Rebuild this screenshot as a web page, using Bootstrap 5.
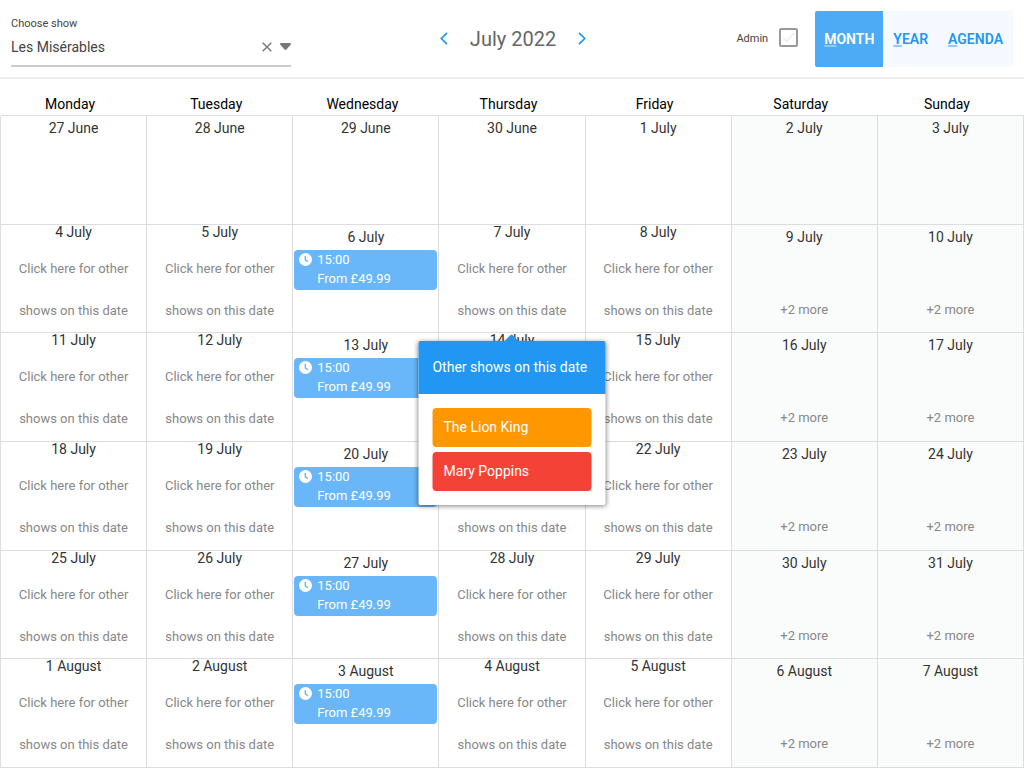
<!DOCTYPE html>
<html lang="en">
<head>
<meta charset="utf-8">
<meta name="viewport" content="width=device-width, initial-scale=1">
<title>Show calendar</title>
<link href="https://cdn.jsdelivr.net/npm/bootstrap@5.3.0/dist/css/bootstrap.min.css" rel="stylesheet">
<style>
  body { font-family: Roboto, "Liberation Sans", sans-serif; font-size: 14px; color: #333; background: #fff; }
  .topbar { height: 79px; border-bottom: 2px solid #eee; padding: 0 11px; }
  .side { flex: 1 1 0; min-width: 0; }
  .show-field { max-width: 280px; padding-top: 6px; }
  .small-label { font-size: 11px; line-height: 14px; color: #444; }
  .show-box { height: 36px; border-bottom: 2px solid #ccc; padding-bottom: 2px; }
  .show-select { appearance: none; border: 0; padding: 0; background: transparent; color: #444; font-size: 14px; line-height: 20px; outline: 0; }
  .icon-button { border: 0; padding: 0; background: transparent; line-height: 0; }
  .period-nav { gap: 22px; padding-left: 2px; }
  .period { font-size: 20px; line-height: 24px; font-weight: 400; color: #666; margin: 0; }
  .admin-box { appearance: none; width: 19px; height: 19px; border: 2px solid #999; border-radius: 2px; margin: 0 17px 3px 11px;
    background: #fff url("data:image/svg+xml,%3Csvg xmlns='http://www.w3.org/2000/svg' viewBox='0 0 16 16'%3E%3Cpath d='M2 8l4 4 8-9' fill='none' stroke='%23eee' stroke-width='1.5'/%3E%3C/svg%3E") center / 15px no-repeat; }
  .views { background: #f4faff; border-radius: 2px; height: 56px; overflow: hidden; }
  .view-button { border: 0; padding: 0 10px; background: transparent; color: #2196f3; font-size: 14px; font-weight: 600; line-height: 20px; }
  .view-button.active { background: #4dabf5; color: #fff; padding: 0 9px; }
  .view-button u { text-decoration-color: #90caf9; text-decoration-thickness: 2px; text-underline-offset: 1px; text-decoration-skip-ink: none; }

  .month-grid { width: 100%; height: calc(100vh - 79px); table-layout: fixed; border-collapse: separate; border-spacing: 0; border-left: 1px solid #ddd; text-align: center; }
  .month-grid thead { height: 37px; }
  .month-grid th { height: 37px; padding: 14px 8px 0 0; vertical-align: top; font-weight: 400; line-height: 22px; color: #000; border-bottom: 1px solid #ddd; background: #fff; }
  .month-grid thead th:first-child { box-shadow: -1px 0 #fff; }
  .month-grid td { height: 108px; padding: 0; vertical-align: top; border-right: 1px solid #ddd; border-bottom: 1px solid #ddd; }
  .month-grid td:nth-child(n+6) { background: #fafcfb; }
  .day { display: block; line-height: 16px; padding-top: 4px; }
  .others .day { padding-top: 0; line-height: 14px; }
  .others-link { display: block; width: 100%; border: 0; padding: 0 10px; margin-top: 9px; background: transparent; color: #888; font-size: 13px; line-height: 42px; }
  .more-link { display: block; margin-top: 57px; font-size: 13px; line-height: 16px; color: #888; text-decoration: none; }
  .performance { margin: 5px 1px 0; border-radius: 4px; background: #69b7f8; color: #fff; font-size: 13px; line-height: 19px; padding: 0 0 2px 5px; text-align: left; text-decoration: none; gap: 5px; }
  .performance svg { margin-top: 3px; }

  .other-shows { top: 8px; left: 50%; width: 187px; z-index: 5; background: #fff; text-align: left; color: #fff; box-shadow: 0 1px 5px rgba(0,0,0,.5); border-radius: 2px; }
  .other-shows h2 { margin: 0; padding: 0 14px; background: #2196f3; font-size: 14px; line-height: 53px; font-weight: 400; border-radius: 2px 2px 0 0; white-space: nowrap; }
  .pointer { bottom: 100%; left: 50%; line-height: 0; }
  .show-list { padding: 14px; gap: 5px; }
  .show-chip { border-radius: 4px; padding: 0 11px; line-height: 39px; color: #fff; text-decoration: none; }
  .lion { background: #ff9800; }
  .mary { background: #f44336; }
</style>
</head>
<body>
<svg class="d-none">
  <symbol id="clock" viewBox="0 0 13 13"><circle cx="6.5" cy="6.5" r="6.5" fill="#fff"/><path d="M6.3 3v3.8l2.6 2" fill="none" stroke="#69b7f8" stroke-width="1.4"/></symbol>
</svg>

<header class="topbar d-flex align-items-center">
  <div class="side">
    <div class="show-field">
      <label class="small-label d-block" for="show">Choose show</label>
      <div class="show-box d-flex align-items-center">
        <select class="show-select flex-grow-1" id="show"><option>Les Misérables</option><option>The Lion King</option><option>Mary Poppins</option></select>
        <button class="icon-button me-2" type="button" aria-label="Clear"><svg width="10" height="10" viewBox="0 0 10 10"><path d="M.7.7l8.6 8.6M9.3.7L.7 9.3" stroke="#777" stroke-width="1.4"/></svg></button>
        <svg width="11" height="7" viewBox="0 0 11 7"><path d="M1 0h9q1.5.3.6 1.7L6.5 6.4q-1 .9-2 0L.4 1.7Q-.5.3 1 0z" fill="#777"/></svg>
      </div>
    </div>
  </div>
  <div class="period-nav d-flex align-items-center">
    <button class="icon-button" type="button" aria-label="Previous month"><svg width="8" height="13" viewBox="0 0 8 13"><path d="M7 .8L1.3 6.5 7 12.2" fill="none" stroke="#2196f3" stroke-width="1.7"/></svg></button>
    <h1 class="period">July 2022</h1>
    <button class="icon-button" type="button" aria-label="Next month"><svg width="8" height="13" viewBox="0 0 8 13"><path d="M1 .8l5.7 5.7L1 12.2" fill="none" stroke="#2196f3" stroke-width="1.7"/></svg></button>
  </div>
  <div class="side d-flex justify-content-end align-items-center">
    <label class="small-label" for="admin">Admin</label>
    <input class="admin-box" type="checkbox" id="admin">
    <div class="views d-flex" role="group" aria-label="View">
      <button class="view-button active" type="button"><u>M</u>ONTH</button>
      <button class="view-button" type="button"><u>Y</u>EAR</button>
      <button class="view-button" type="button"><u>A</u>GENDA</button>
    </div>
  </div>
</header>

<main>
<table class="month-grid">
  <thead>
    <tr><th scope="col">Monday</th><th scope="col">Tuesday</th><th scope="col">Wednesday</th><th scope="col">Thursday</th><th scope="col">Friday</th><th scope="col">Saturday</th><th scope="col">Sunday</th></tr>
  </thead>
  <tbody>
    <tr>
      <td><span class="day">27 June</span></td>
      <td><span class="day">28 June</span></td>
      <td><span class="day">29 June</span></td>
      <td><span class="day">30 June</span></td>
      <td><span class="day">1 July</span></td>
      <td><span class="day">2 July</span></td>
      <td><span class="day">3 July</span></td>
    </tr>
    <tr>
      <td class="others"><span class="day">4 July</span><button class="others-link" type="button">Click here for other shows on this date</button></td>
      <td class="others"><span class="day">5 July</span><button class="others-link" type="button">Click here for other shows on this date</button></td>
      <td><span class="day">6 July</span><a class="performance d-flex" href="#"><svg width="13" height="13"><use href="#clock"/></svg><span>15:00<br>From £49.99</span></a></td>
      <td class="others"><span class="day">7 July</span><button class="others-link" type="button">Click here for other shows on this date</button></td>
      <td class="others"><span class="day">8 July</span><button class="others-link" type="button">Click here for other shows on this date</button></td>
      <td><span class="day">9 July</span><a class="more-link" href="#">+2 more</a></td>
      <td><span class="day">10 July</span><a class="more-link" href="#">+2 more</a></td>
    </tr>
    <tr>
      <td class="others"><span class="day">11 July</span><button class="others-link" type="button">Click here for other shows on this date</button></td>
      <td class="others"><span class="day">12 July</span><button class="others-link" type="button">Click here for other shows on this date</button></td>
      <td><span class="day">13 July</span><a class="performance d-flex" href="#"><svg width="13" height="13"><use href="#clock"/></svg><span>15:00<br>From £49.99</span></a></td>
      <td class="others position-relative"><span class="day">14 July</span>
        <section class="other-shows position-absolute translate-middle-x">
          <span class="pointer position-absolute translate-middle-x"><svg width="14" height="7" viewBox="0 0 14 7"><path d="M0 7L6 1q1-.8 2 0l6 6z" fill="#2196f3"/></svg></span>
          <h2>Other shows on this date</h2>
          <div class="show-list d-flex flex-column">
            <a class="show-chip lion" href="#">The Lion King</a>
            <a class="show-chip mary" href="#">Mary Poppins</a>
          </div>
        </section>
      </td>
      <td class="others"><span class="day">15 July</span><button class="others-link" type="button">Click here for other shows on this date</button></td>
      <td><span class="day">16 July</span><a class="more-link" href="#">+2 more</a></td>
      <td><span class="day">17 July</span><a class="more-link" href="#">+2 more</a></td>
    </tr>
    <tr>
      <td class="others"><span class="day">18 July</span><button class="others-link" type="button">Click here for other shows on this date</button></td>
      <td class="others"><span class="day">19 July</span><button class="others-link" type="button">Click here for other shows on this date</button></td>
      <td><span class="day">20 July</span><a class="performance d-flex" href="#"><svg width="13" height="13"><use href="#clock"/></svg><span>15:00<br>From £49.99</span></a></td>
      <td class="others"><span class="day">21 July</span><button class="others-link" type="button">Click here for other shows on this date</button></td>
      <td class="others"><span class="day">22 July</span><button class="others-link" type="button">Click here for other shows on this date</button></td>
      <td><span class="day">23 July</span><a class="more-link" href="#">+2 more</a></td>
      <td><span class="day">24 July</span><a class="more-link" href="#">+2 more</a></td>
    </tr>
    <tr>
      <td class="others"><span class="day">25 July</span><button class="others-link" type="button">Click here for other shows on this date</button></td>
      <td class="others"><span class="day">26 July</span><button class="others-link" type="button">Click here for other shows on this date</button></td>
      <td><span class="day">27 July</span><a class="performance d-flex" href="#"><svg width="13" height="13"><use href="#clock"/></svg><span>15:00<br>From £49.99</span></a></td>
      <td class="others"><span class="day">28 July</span><button class="others-link" type="button">Click here for other shows on this date</button></td>
      <td class="others"><span class="day">29 July</span><button class="others-link" type="button">Click here for other shows on this date</button></td>
      <td><span class="day">30 July</span><a class="more-link" href="#">+2 more</a></td>
      <td><span class="day">31 July</span><a class="more-link" href="#">+2 more</a></td>
    </tr>
    <tr>
      <td class="others"><span class="day">1 August</span><button class="others-link" type="button">Click here for other shows on this date</button></td>
      <td class="others"><span class="day">2 August</span><button class="others-link" type="button">Click here for other shows on this date</button></td>
      <td><span class="day">3 August</span><a class="performance d-flex" href="#"><svg width="13" height="13"><use href="#clock"/></svg><span>15:00<br>From £49.99</span></a></td>
      <td class="others"><span class="day">4 August</span><button class="others-link" type="button">Click here for other shows on this date</button></td>
      <td class="others"><span class="day">5 August</span><button class="others-link" type="button">Click here for other shows on this date</button></td>
      <td><span class="day">6 August</span><a class="more-link" href="#">+2 more</a></td>
      <td><span class="day">7 August</span><a class="more-link" href="#">+2 more</a></td>
    </tr>
  </tbody>
</table>
</main>
<script src="https://cdn.jsdelivr.net/npm/bootstrap@5.3.0/dist/js/bootstrap.bundle.min.js"></script>
</body>
</html>
